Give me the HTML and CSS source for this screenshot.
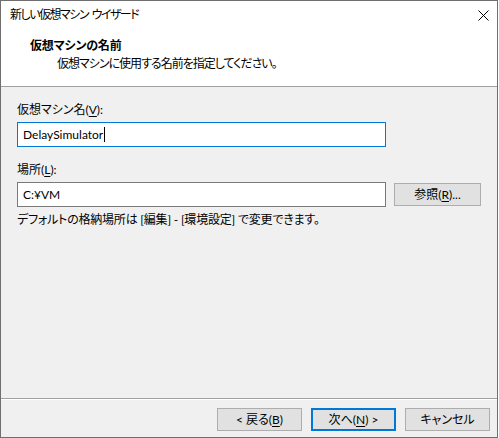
FILE: index.html
```html
<!DOCTYPE html>
<html lang="ja">
<head>
<meta charset="utf-8">
<title>新しい仮想マシン ウイザード</title>
<link rel="stylesheet" href="styles.css">
</head>
<body>
<div class="window">
  <div class="top">
    <div class="titlebar">
      <span class="title">新しい仮想マシン ウイザード</span>
      <svg class="close" width="11" height="11" viewBox="0 0 11 11"><path d="M0.5 0.5 L10.5 10.5 M10.5 0.5 L0.5 10.5" stroke="#000" stroke-width="1" fill="none"/></svg>
    </div>
    <div class="header">
      <div class="h-title">仮想マシンの名前</div>
      <div class="h-sub">仮想マシンに使用する名前を指定してください。</div>
    </div>
  </div>
  <div class="content">
    <div class="label">仮想マシン名(<u>V</u>):</div>
    <div class="input focused"><span>DelaySimulator</span><span class="caret"></span></div>
    <div class="label second">場所(<u>L</u>):</div>
    <div class="row">
      <div class="input">C:¥VM</div>
      <div class="btn browse">参照(<u>R</u>)...</div>
    </div>
    <div class="note">デフォルトの格納場所は [編集] - [環境設定] で変更できます。</div>
  </div>
  <div class="footer">
    <div class="btn">&lt; 戻る(<u>B</u>)</div>
    <div class="btn default">次へ(<u>N</u>) &gt;</div>
    <div class="btn">キャンセル</div>
  </div>
</div>
</body>
</html>
```
FILE: styles.css
```css
html, body {
  margin: 0;
  padding: 0;
  background: #ffffff;
}
body {
  font-family: "Lato", "Noto Sans CJK JP", sans-serif;
  font-size: 12px;
  color: #000;
  font-feature-settings: "palt";
}
.window {
  width: 498px;
  height: 438px;
  box-sizing: border-box;
  border: 1px solid #6f6f6f;
  background: #f0f0f0;
  display: flex;
  flex-direction: column;
}
.top {
  background: #ffffff;
  border-bottom: 1px solid #a0a0a0;
  height: 86px;
  box-sizing: border-box;
}
.titlebar {
  height: 30px;
  box-sizing: border-box;
  padding: 6px 8px 0 9px;
  display: flex;
  align-items: flex-start;
}
.title {
  line-height: 16px;
  letter-spacing: -1.5px;
  word-spacing: 2px;
}
.close {
  margin-left: auto;
  margin-top: 3px;
  display: block;
}
.header {
  padding: 7px 0 0 29px;
}
.h-title {
  font-weight: bold;
  line-height: 16px;
  letter-spacing: -0.2px;
}
.h-sub {
  line-height: 16px;
  margin-top: 2px;
  padding-left: 27px;
  letter-spacing: -1px;
}
.content {
  flex: 1;
  padding: 15px 0 0 16px;
}
.label {
  line-height: 16px;
  margin-bottom: 4px;
}
.label.second {
  margin-top: 15px;
}
.input {
  width: 369px;
  height: 25px;
  box-sizing: border-box;
  border: 1px solid #7a7a7a;
  background: #fff;
  padding-left: 5px;
  line-height: 23px;
  display: flex;
  align-items: center;
}
.input.focused {
  border-color: #0078d7;
}
.caret {
  display: inline-block;
  width: 1px;
  height: 15px;
  background: #000;
  margin-left: 1px;
}
.row {
  display: flex;
  align-items: center;
  gap: 8px;
}
.btn {
  width: 85px;
  height: 23px;
  box-sizing: border-box;
  border: 1px solid #adadad;
  background: #e1e1e1;
  display: flex;
  align-items: center;
  justify-content: center;
  line-height: 16px;
}
.btn.browse {
  width: 87px;
}
.btn.default {
  border: 2px solid #0078d7;
}
.note {
  margin-top: 5px;
  line-height: 16px;
  letter-spacing: -0.2px;
}
.footer {
  height: 39px;
  box-sizing: border-box;
  border-top: 1px solid #a0a0a0;
  box-shadow: inset 0 1px 0 #ffffff;
  padding: 9px 7px 0 0;
  display: flex;
  justify-content: flex-end;
  align-items: flex-start;
  gap: 9px;
}
u {
  text-decoration-thickness: 1px;
  text-underline-offset: 2px;
}
```
